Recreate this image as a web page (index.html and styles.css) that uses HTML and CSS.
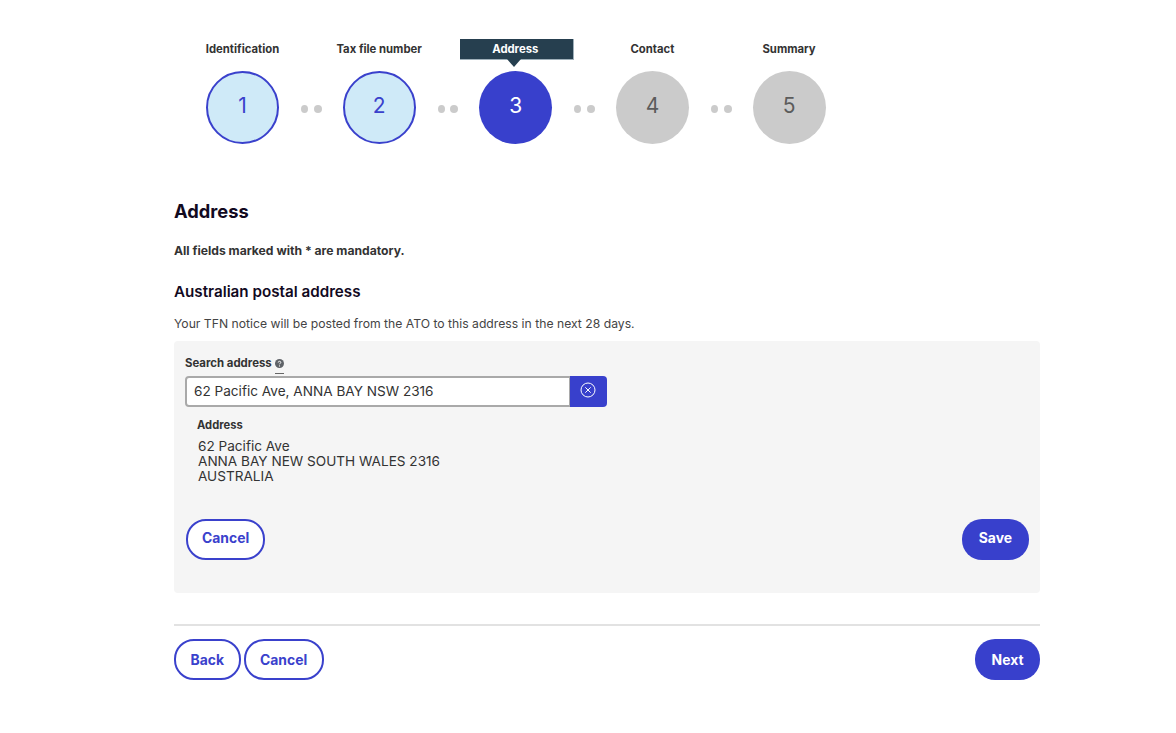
FILE: index.html
```html
<!DOCTYPE html>
<html lang="en">
<head>
<meta charset="utf-8">
<title>Address</title>
<link rel="stylesheet" href="styles.css">
</head>
<body>
<main class="page">
  <ol class="steps">
    <li class="step done"><span class="step-label">Identification</span><span class="circle">1</span></li>
    <li class="dots"><i></i><i></i></li>
    <li class="step done"><span class="step-label">Tax file number</span><span class="circle">2</span></li>
    <li class="dots"><i></i><i></i></li>
    <li class="step current"><span class="step-label">Address</span><span class="circle">3</span></li>
    <li class="dots"><i></i><i></i></li>
    <li class="step todo"><span class="step-label">Contact</span><span class="circle">4</span></li>
    <li class="dots"><i></i><i></i></li>
    <li class="step todo"><span class="step-label">Summary</span><span class="circle">5</span></li>
  </ol>

  <h1 class="title">Address</h1>
  <p class="mandatory">All fields marked with * are mandatory.</p>
  <h2 class="subtitle">Australian postal address</h2>
  <p class="note">Your TFN notice will be posted from the ATO to this address in the next 28 days.</p>

  <section class="panel">
    <div class="search-label">
      <span>Search address</span>
      <span class="help"><svg width="9" height="9" viewBox="0 0 9 9"><circle cx="4.5" cy="4.5" r="4.5" fill="#5f6368"/><path d="M3.2 3.5c0-.8.6-1.2 1.3-1.2s1.3.4 1.3 1.1c0 .9-1.3 1-1.3 1.9" fill="none" stroke="#fff" stroke-width="1"/><circle cx="4.5" cy="6.9" r=".6" fill="#fff"/></svg></span>
    </div>
    <div class="search-row">
      <div class="search-input">62 Pacific Ave, ANNA BAY NSW 2316</div>
      <button class="clear" type="button" aria-label="Clear"><svg width="16" height="16" viewBox="0 0 16 16" fill="none" stroke="#fff" stroke-width="1"><circle cx="8" cy="8" r="7"/><path d="M5.3 5.3l5.4 5.4M10.7 5.3l-5.4 5.4"/></svg></button>
    </div>
    <div class="address">
      <div class="address-label">Address</div>
      <div class="address-text">62 Pacific Ave<br>ANNA BAY NEW SOUTH WALES 2316<br>AUSTRALIA</div>
    </div>
    <div class="actions panel-actions">
      <button class="btn outline" type="button">Cancel</button>
      <button class="btn solid" type="button">Save</button>
    </div>
  </section>

  <hr class="rule">

  <div class="actions page-actions">
    <div class="group">
      <button class="btn outline" type="button">Back</button>
      <button class="btn outline" type="button">Cancel</button>
    </div>
    <button class="btn solid" type="button">Next</button>
  </div>
</main>
</body>
</html>
```
FILE: styles.css
```css
* { box-sizing: border-box; }
html, body { margin: 0; padding: 0; background: #fff; }
body { font-family: Inter, "Liberation Sans", sans-serif; color: #333; }
.page { width: 866px; margin-left: 174px; padding-top: 39px; }

.steps { list-style: none; margin: 0; padding: 0 0 0 11.5px; display: flex; align-items: flex-start; }
.step { flex: none; width: 114px; display: flex; flex-direction: column; align-items: center; position: relative; }
.step-label { height: 21px; width: 114px; font-size: 11.3px; font-weight: 700; line-height: 20px; text-align: center; color: #333; white-space: nowrap; }
.step .circle { margin-top: 11px; width: 73px; height: 73px; border-radius: 50%; display: flex; align-items: center; justify-content: center; padding-bottom: 4px; font-size: 21px; font-weight: 400; }
.done .circle { background: #cfeaf8; border: 2px solid #3a41cc; color: #3a41cc; }
.current .circle { background: #3840cc; color: #fff; }
.todo .circle { background: #cbcbcb; color: #5c5c5c; }
.current .step-label { background: #263f4f; color: #fff; position: relative; left: 1px; padding-right: 2px; border-right: 1px solid #9fb0ba; border-bottom: 1px solid #9fb0ba; }
.current .step-label::after { content: ""; position: absolute; left: 50%; bottom: -8px; margin-left: -9.5px; border-left: 7.5px solid transparent; border-right: 7.5px solid transparent; border-top: 8px solid #263f4f; }
.dots { flex: none; width: 22.65px; margin-top: 66px; padding: 0 0.5px 0 1.5px; display: flex; justify-content: space-between; align-items: center; }
.dots i { width: 7px; height: 8px; border-radius: 50%; background: #cbcbcb; }
.dots i + i { width: 8px; }

.title { margin: 56px 0 0; font-size: 18.3px; line-height: 22px; font-weight: 700; color: #120a1f; }
.mandatory { margin: 21px 0 0; font-size: 12.15px; line-height: 16px; font-weight: 700; color: #333; }
.subtitle { margin: 24px 0 0; font-size: 15.2px; line-height: 18px; font-weight: 600; color: #120a1f; }
.note { margin: 15px 0 0; font-size: 12.2px; line-height: 16px; font-weight: 400; color: #444; }

.panel { margin-top: 9px; height: 252px; background: #f5f5f5; border-radius: 4px; padding: 14px 11px 0; display: flex; flex-direction: column; }
.search-label { display: flex; align-items: center; gap: 3px; height: 16px; font-size: 11.4px; font-weight: 700; color: #333; }
.help { display: inline-flex; position: relative; }
.help::after { content: ""; position: absolute; left: 0; right: 0; bottom: -6px; height: 1px; background: #666; }
.search-row { display: flex; margin-top: 5px; width: 422px; height: 31px; }
.search-input { flex: 1; background: #fff; border: 2px solid #a9a9a9; border-right-width: 1px; border-radius: 4px 0 0 4px; padding: 0 7px; font-size: 13.6px; line-height: 27px; color: #333; }
.clear { flex: none; width: 37px; padding: 0 2px 3px 0; border: 0; background: #3840cc; border-radius: 0 4px 4px 0; display: flex; align-items: center; justify-content: center; }
.address { padding-left: 12px; margin-top: 10px; }
.address-label { font-size: 11.2px; line-height: 16px; font-weight: 700; color: #333; }
.address-text { margin: 6px 0 0 1px; font-size: 13.6px; line-height: 15px; color: #333; }
.actions { display: flex; justify-content: space-between; align-items: center; }
.panel-actions { margin-top: 35px; padding-left: 1px; }
.group { display: flex; gap: 3px; }
.btn { height: 41px; border-radius: 20px; font-family: inherit; font-size: 13.9px; font-weight: 700; cursor: pointer; }
.outline { background: #fff; border: 2px solid #3a41cc; color: #3a41cc; padding: 0 14.5px; }
.solid { background: #3840cc; border: 0; color: #fff; padding: 0 16.5px; }
.panel-actions .outline { padding: 0 14px 3px; }
.panel-actions .solid { padding: 0 17px 3px; }
.rule { margin: 31px 0 13px; border: 0; border-top: 2px solid #e2e2e2; }
```
